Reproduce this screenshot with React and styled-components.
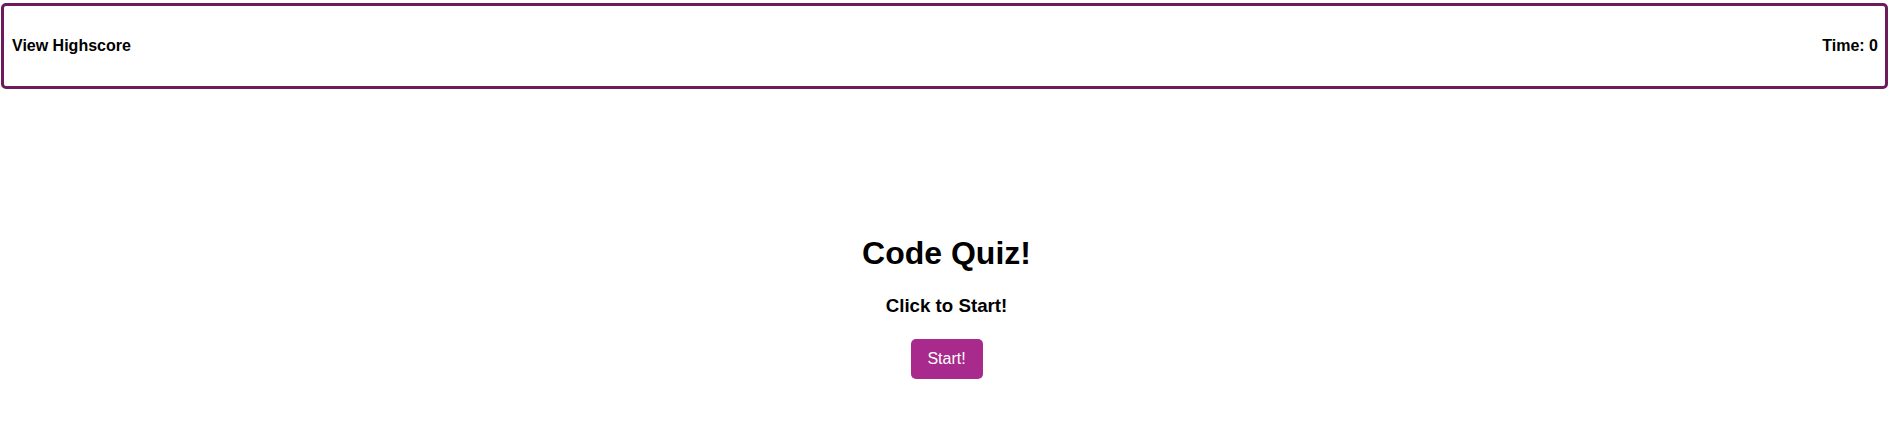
import styled, { createGlobalStyle } from "styled-components";

const GlobalStyle = createGlobalStyle`
body{
    margin: 0;
    background: #ffffff;
    font-family: "Liberation Sans", Arial, sans-serif;
    color: #000000;
}
`;

function App() {
    return (
        <>
            <GlobalStyle />
            <Header>
                <HeaderLink>View Highscore</HeaderLink>
                <Timer>Time: 0</Timer>
            </Header>
            <Main>
                <Title>Code Quiz!</Title>
                <Subtitle>Click to Start!</Subtitle>
                <StartButton>Start!</StartButton>
            </Main>
        </>
    )
}

export default App;

const Header = styled.header`
box-sizing: border-box;
height: 86px;
margin: 3px 9px 0 1px;
padding: 0px 7px 0px 8px;
border: 3px solid #6e1b5b;
border-radius: 5px;
display: flex;
justify-content: space-between;
align-items: center;
font-size: 16px;
font-weight: 700;
`;

const HeaderLink = styled.span`
cursor: pointer;
`;

const Timer = styled.span``;

const Main = styled.main`
padding: 146px 4px 0 0;
display: flex;
flex-direction: column;
align-items: center;
`;

const Title = styled.h1`
margin: 0;
font-size: 32px;
font-weight: 700;
`;

const Subtitle = styled.h3`
margin: 23px 0 0 0;
font-size: 18.72px;
font-weight: 700;
`;

const StartButton = styled.button`
margin-top: 22px;
width: 72px;
height: 40px;
padding: 0;
border: none;
border-radius: 5px;
background-color: #a82a8c;
color: #ffffff;
font-family: "Liberation Sans", Arial, sans-serif;
font-size: 16px;
cursor: pointer;
`;
